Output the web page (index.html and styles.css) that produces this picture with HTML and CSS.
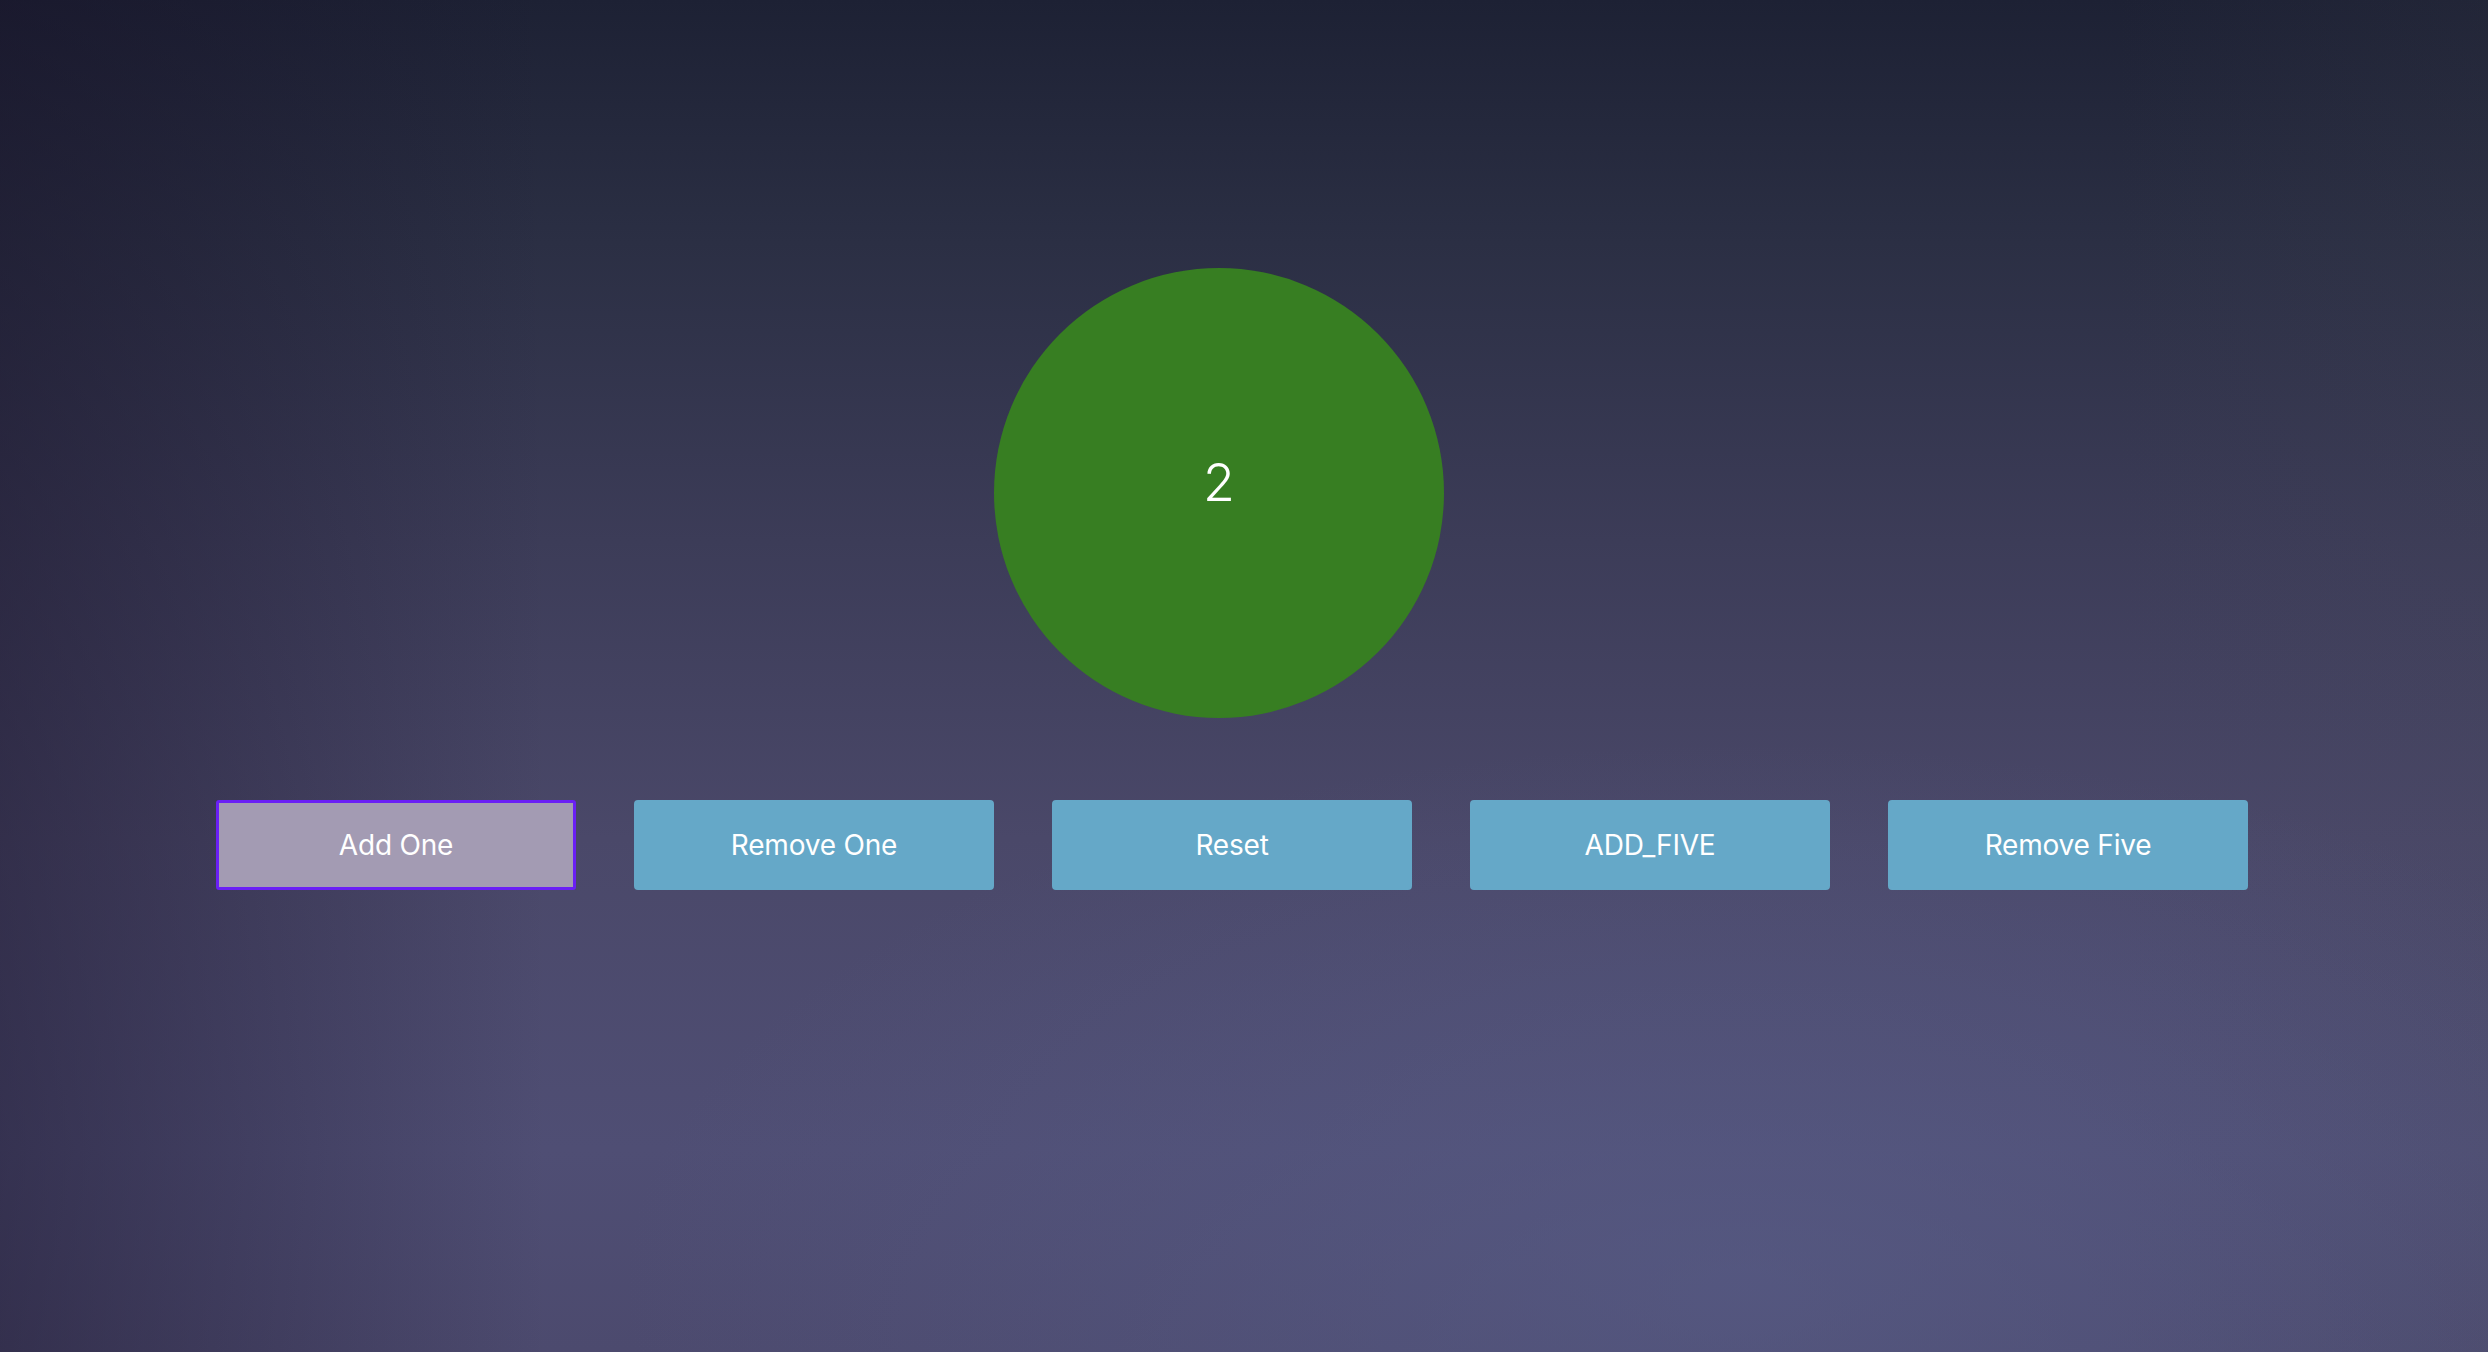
FILE: index.html
```html
<!DOCTYPE html>
<html lang="en">
<head>
<meta charset="utf-8">
<title>Counter</title>
<link rel="stylesheet" href="styles.css">
</head>
<body>
<main class="app">
  <div class="counter-row">
    <div class="counter">2</div>
  </div>
  <div class="actions">
    <button class="btn btn-focused">Add One</button>
    <button class="btn">Remove One</button>
    <button class="btn">Reset</button>
    <button class="btn">ADD_FIVE</button>
    <button class="btn">Remove Five</button>
  </div>
</main>
</body>
</html>
```

FILE: styles.css
```css
html, body {
  margin: 0;
  padding: 0;
  height: 100%;
}

body {
  font-family: Inter, "Open Sans", "Liberation Sans", sans-serif;
  background-color: #3b3a56;
  background-image:
    radial-gradient(ellipse 45% 40% at 70% 95%, rgba(90, 96, 140, 0.55), rgba(90, 96, 140, 0) 100%),
    linear-gradient(90deg, rgba(22, 16, 38, 0.45) 0%, rgba(22, 16, 38, 0) 22%, rgba(0, 0, 0, 0) 85%, rgba(70, 70, 80, 0.12) 100%),
    linear-gradient(180deg, #1d2134 0%, #2b2f44 18%, #3c3c58 40%, #4a4869 62%, #4f4e74 85%, #4c4a6e 100%);
  overflow: hidden;
}

.app {
  display: flex;
  flex-direction: column;
  padding-top: 268px;
}

.counter-row {
  display: flex;
  padding-left: 994px;
}

.counter {
  width: 450px;
  height: 450px;
  border-radius: 50%;
  background: #377e22;
  color: #ffffff;
  font-size: 52px;
  font-weight: 300;
  display: flex;
  align-items: center;
  justify-content: center;
  padding-bottom: 22px;
  box-sizing: border-box;
}

.actions {
  display: flex;
  gap: 58px;
  padding-left: 216px;
  margin-top: 82px;
}

.btn {
  width: 360px;
  height: 90px;
  border: 3px solid #65a8c8;
  border-radius: 4px;
  background: #65a8c8;
  color: #ffffff;
  font-family: Inter, "Open Sans", "Liberation Sans", sans-serif;
  font-size: 28px;
  font-weight: 400;
  letter-spacing: -0.2px;
  padding: 0;
  box-sizing: border-box;
  cursor: pointer;
}

.btn-focused {
  background: #a39bb3;
  border-color: #6a1ff5;
  border-radius: 3px;
}
```
